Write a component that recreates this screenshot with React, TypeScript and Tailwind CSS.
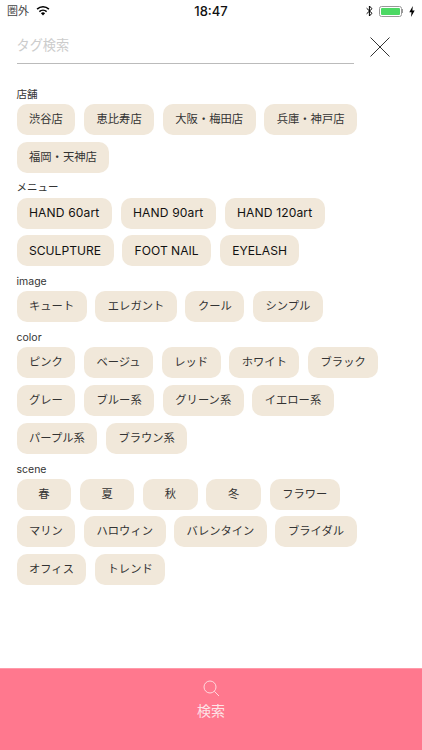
const sections = [
  { label: "店舗", tags: ["渋谷店", "恵比寿店", "大阪・梅田店", "兵庫・神戸店", "福岡・天神店"] },
  { label: "メニュー", tags: ["HAND 60art", "HAND 90art", "HAND 120art", "SCULPTURE", "FOOT NAIL", "EYELASH"] },
  { label: "image", tags: ["キュート", "エレガント", "クール", "シンプル"] },
  {
    label: "color",
    tags: ["ピンク", "ベージュ", "レッド", "ホワイト", "ブラック", "グレー", "ブルー系", "グリーン系", "イエロー系", "パープル系", "ブラウン系"],
  },
  {
    label: "scene",
    tags: ["春", "夏", "秋", "冬", "フラワー", "マリン", "ハロウィン", "バレンタイン", "ブライダル", "オフィス", "トレンド"],
  },
];

// ステータスバー
function StatusBar() {
  return (
    <div className="relative flex h-[22px] items-center justify-between pl-[7px] pr-[7px] text-black">
      <div className="flex items-center gap-[7px]">
        <span className="text-[11px] leading-none text-[#444]">圏外</span>
        <svg width="14" height="10" viewBox="0 0 15 11">
          <path d="M7.5 10.5 5.2 7.9a3.3 3.3 0 0 1 4.6 0Z" fill="#000" />
          <path d="M3.5 6.2a5.8 5.8 0 0 1 8 0" fill="none" stroke="#000" strokeWidth="1.7" />
          <path d="M1 3.5a9.4 9.4 0 0 1 13 0" fill="none" stroke="#000" strokeWidth="1.7" />
        </svg>
      </div>
      <span className="absolute left-0 right-0 text-center text-[13px] font-medium leading-none text-[#111]">18:47</span>
      <div className="flex items-center gap-[6px]">
        <svg width="7" height="12" viewBox="0 0 7 12">
          <path d="M0.6 3.2 6 8.3 3.4 11V1L6 3.7.6 8.8" fill="none" stroke="#000" strokeWidth="1" />
        </svg>
        <div className="flex items-center">
          <div className="h-[11px] w-[23px] rounded-[2.5px] border border-[#999] p-[1px]">
            <div className="h-full w-full rounded-[1px] bg-[#4cd964]" />
          </div>
          <div className="h-[4px] w-[1px] bg-[#999]" />
        </div>
        <svg width="6" height="11" viewBox="0 0 6 11">
          <path d="M3.8 0 .3 6.2h2.2L2 11l3.7-6.4H3.4Z" fill="#000" />
        </svg>
      </div>
    </div>
  );
}

export default function App() {
  return (
    <div
      className="flex h-[750px] w-full flex-col overflow-hidden bg-white"
      style={{ fontFamily: "Inter, 'Noto Sans CJK JP', sans-serif" }}
    >
      <StatusBar />

      {/* 検索ヘッダー */}
      <div className="flex h-[57px] items-start pl-[16.5px] pr-[32px]">
        <div className="flex h-[42px] flex-1 items-center border-b border-[#bbb] pt-[6px]">
          <input
            placeholder="タグ検索"
            className="w-full bg-transparent text-[13.2px] outline-none placeholder:text-[#ccc]"
          />
        </div>
        <button className="ml-[16px] mt-[15px]" aria-label="閉じる">
          <svg width="20" height="20" viewBox="0 0 20 20" className="block">
            <path d="M0.5 0.5 19.5 19.5M19.5 0.5 0.5 19.5" stroke="#333" strokeWidth="1" />
          </svg>
        </button>
      </div>

      {/* タグ一覧 */}
      <div className="flex-1 px-[16.5px]">
        {sections.map((section) => (
          <div key={section.label}>
            <div className="mt-[9px] mb-[2px] flex h-[14px] items-center text-[10.5px] leading-none text-[#333]">
              {section.label}
            </div>
            <div className="flex flex-wrap gap-x-[8.6px] gap-y-[6.7px]">
              {section.tags.map((tag) => (
                <button
                  key={tag}
                  className={`flex h-[31px] min-w-[54.7px] items-center justify-center rounded-[10px] bg-[#f1e8da] px-[12.5px] leading-none ${
                    section.label === "メニュー" ? "text-[12.1px] text-[#111]" : "text-[11.3px] text-[#333]"
                  } ${tag.startsWith("HAND") ? "tracking-[0.12px]" : ""}`}
                >
                  {tag}
                </button>
              ))}
            </div>
          </div>
        ))}
      </div>

      {/* 検索ボタン */}
      <button className="flex h-[82px] flex-col items-center border-t border-[#ff9aa9] bg-[#ff788e] pt-[11px] text-[#fde3e7]">
        <svg width="17" height="17" viewBox="0 0 17 17" fill="none" stroke="currentColor" strokeWidth="0.9">
          <circle cx="7" cy="7" r="6" />
          <path d="M11.3 11.3 16 16" />
        </svg>
        <span className="mt-[5px] text-[14px] leading-[18px]">検索</span>
      </button>
    </div>
  );
}
